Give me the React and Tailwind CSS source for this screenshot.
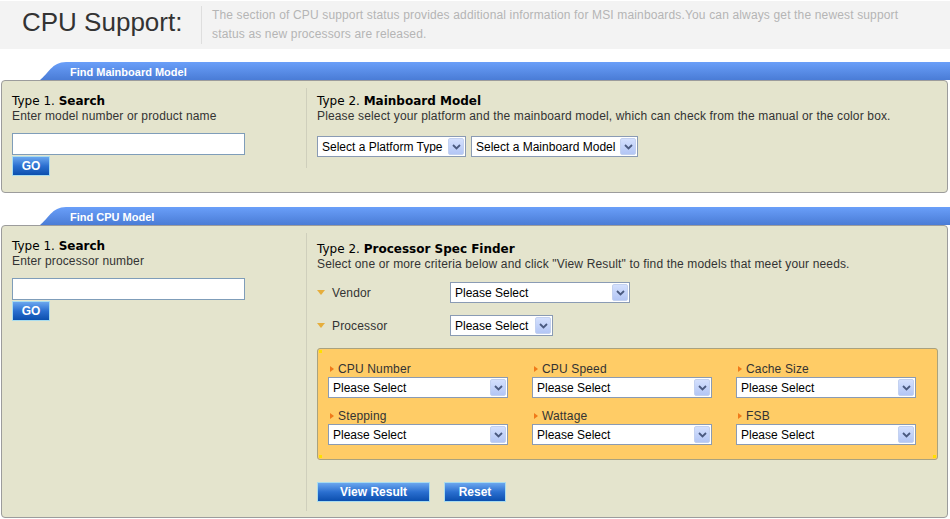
import React from 'react';

const font = { fontFamily: '"Liberation Sans", Arial, sans-serif' };

const Chevron = () => (
  <svg width="9" height="6" viewBox="0 0 9 6">
    <path d="M1 1 L4.5 4.5 L8 1" fill="none" stroke="#4a5a80" strokeWidth="1.8" />
  </svg>
);

const Select = ({ text, w }) => (
  <div className={`${w} h-[21px] flex items-center bg-white border border-[#8a9bb4]`}>
    <span className="flex-1 pl-[4px] text-[12px] text-black leading-none whitespace-nowrap overflow-hidden">{text}</span>
    <span className="w-[16px] h-[17px] mr-[1px] flex items-center justify-center bg-gradient-to-b from-[#d4e0fd] to-[#b3c6f5] border border-[#c3d1f0] rounded-[2px]">
      <Chevron />
    </span>
  </div>
);

const BlueButton = ({ children, w }) => (
  <button
    className={`${w} h-[20px] block border border-[#a9dcee] bg-gradient-to-b from-[#6aa6ee] via-[#2a6fd0] to-[#0a4fae] text-white font-bold text-[12px] leading-none`}
  >
    {children}
  </button>
);

const Tab = ({ title, id }) => (
  <div className="flex h-[18px] pl-[40px]">
    <svg width="30" height="18" viewBox="0 0 30 18" className="shrink-0">
      <defs>
        <linearGradient id={id} x1="0" y1="0" x2="0" y2="1">
          <stop offset="0" stopColor="#6a9ff9" />
          <stop offset="1" stopColor="#4a7cd6" />
        </linearGradient>
      </defs>
      <path d="M0 18 C 8 12, 12 0, 26 0 L 30 0 L 30 18 Z" fill={`url(#${id})`} />
    </svg>
    <div className="flex-1 bg-gradient-to-b from-[#6a9ff9] to-[#4a7cd6] text-white font-bold text-[11px] leading-[18px] pt-[1px]">
      {title}
    </div>
  </div>
);

const Heading = ({ num, title }) => (
  <div className="text-[12px] leading-[14px] text-black" style={{ fontFamily: '"DejaVu Sans", Verdana, sans-serif' }}>
    Type {num}. <b>{title}</b>
  </div>
);

const SearchBlock = ({ hint }) => (
  <div className="w-[304px] shrink-0 pl-[10px] pt-[6px]">
    <Heading num="1" title="Search" />
    <div className="text-[12px] tracking-[0.15px] leading-[14px] text-[#333] mt-px">{hint}</div>
    <div className="w-[233px] h-[22px] mt-[10px] bg-white border border-[#7f9db9]" />
    <div className="mt-px flex">
      <BlueButton w="w-[38px]">GO</BlueButton>
    </div>
  </div>
);

const DownArrow = () => (
  <svg width="8" height="5" viewBox="0 0 8 5" className="shrink-0">
    <path d="M0 0 L8 0 L4 5 Z" fill="#e6ae3c" />
  </svg>
);

const RightArrow = () => (
  <svg width="4" height="6" viewBox="0 0 4 6" className="shrink-0">
    <path d="M0 0 L4 3 L0 6 Z" fill="#f07a1a" />
  </svg>
);

const Crit = ({ label }) => (
  <div className="w-[180px]">
    <div className="flex items-center gap-[4px] pl-[2px] text-[12px] tracking-[0.15px] leading-[14px] text-[#333]">
      <RightArrow />
      <span>{label}</span>
    </div>
    <div className="mt-px">
      <Select text="Please Select" w="w-[180px]" />
    </div>
  </div>
);

export default function App() {
  return (
    <div className="w-[950px] h-[519px] bg-white overflow-hidden" style={font}>
      <div className="mt-px h-[48px] bg-[#f3f3f3] flex">
        <div className="w-[201px] shrink-0 pl-[22px] pt-[6px] text-[26px] leading-[30px] text-[#333]">CPU Support:</div>
        <div className="my-[5px] border-l border-[#dedede] pl-[10px] text-[12px] tracking-[0.15px] leading-[19px] text-[#b5b5b5]">
          The section of CPU support status provides additional information for MSI mainboards.You can always get the newest support
          <br />
          status as new processors are released.
        </div>
      </div>

      <div className="mt-[13px]">
        <Tab title="Find Mainboard Model" id="tab-a" />
        <div className="ml-px mr-[2px] border border-[#9c9c9c] rounded-[4px] bg-[#e4e4cd] pt-[7px] pb-[16px] flex items-start">
          <SearchBlock hint="Enter model number or product name" />
          <div className="flex-1 border-l border-[#cfcfbc] pl-[10px] pt-[6px] pb-[11px]">
            <Heading num="2" title="Mainboard Model" />
            <div className="text-[12px] tracking-[0.15px] leading-[14px] text-[#333] mt-px">
              Please select your platform and the mainboard model, which can check from the manual or the color box.
            </div>
            <div className="flex gap-[5px] mt-[13px]">
              <Select text="Select a Platform Type" w="w-[149px]" />
              <Select text="Select a Mainboard Model" w="w-[167px]" />
            </div>
          </div>
        </div>
      </div>

      <div className="mt-[14px]">
        <Tab title="Find CPU Model" id="tab-b" />
        <div className="ml-px mr-[2px] border border-[#9c9c9c] rounded-[4px] bg-[#e4e4cd] pt-[7px] pb-[6px] flex items-start">
          <SearchBlock hint="Enter processor number" />
          <div className="flex-1 border-l border-[#cfcfbc] pl-[10px] pt-[9px] pb-[9px]">
            <Heading num="2" title="Processor Spec Finder" />
            <div className="text-[12px] tracking-[0.15px] leading-[14px] text-[#333] mt-px">
              Select one or more criteria below and click "View Result" to find the models that meet your needs.
            </div>
            <div className="flex items-center mt-[11px]">
              <div className="w-[133px] flex items-center gap-[7px] text-[12px] tracking-[0.15px] text-[#333]">
                <DownArrow />
                <span>Vendor</span>
              </div>
              <Select text="Please Select" w="w-[180px]" />
            </div>
            <div className="flex items-center mt-[12px]">
              <div className="w-[133px] flex items-center gap-[7px] text-[12px] tracking-[0.15px] text-[#333]">
                <DownArrow />
                <span>Processor</span>
              </div>
              <Select text="Please Select" w="w-[103px]" />
            </div>
            <div className="relative w-[621px] mt-[12px] border border-[#a9a27e] rounded-[3px] bg-[#ffcc66] pl-[10px] pt-[13px] pb-[14px]">
              <span className="absolute left-[1px] top-[1px] w-[3px] h-[3px] bg-[#ffe000]" />
              <span className="absolute left-[1px] bottom-[1px] w-[3px] h-[3px] bg-[#ffe000]" />
              <span className="absolute right-[1px] bottom-[1px] w-[3px] h-[3px] bg-[#ffe000]" />
              <div className="grid grid-cols-[204px_204px_180px] gap-y-[11px]">
                <Crit label="CPU Number" />
                <Crit label="CPU Speed" />
                <Crit label="Cache Size" />
                <Crit label="Stepping" />
                <Crit label="Wattage" />
                <Crit label="FSB" />
              </div>
            </div>
            <div className="flex gap-[14px] mt-[22px]">
              <BlueButton w="w-[113px]">View Result</BlueButton>
              <BlueButton w="w-[62px]">Reset</BlueButton>
            </div>
          </div>
        </div>
      </div>
    </div>
  );
}
